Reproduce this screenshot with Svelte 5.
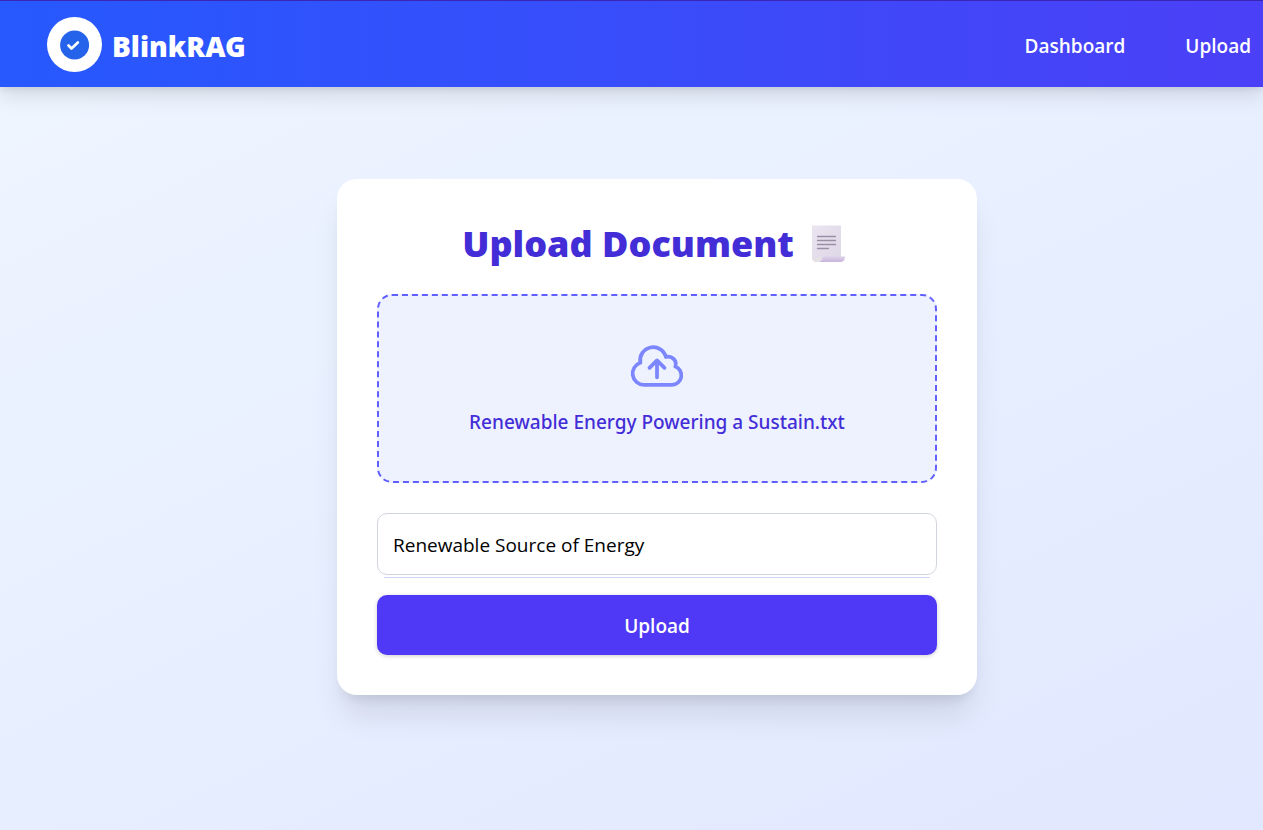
<script>
  let title = $state('Renewable Source of Energy');
  let fileName = $state('Renewable Energy Powering a Sustain.txt');

  function pick(event) {
    const file = event.currentTarget.files[0];
    if (file) fileName = file.name;
  }
</script>

<div class="page">
  <nav class="bar">
    <a class="brand" href="#home">
      <span class="logo">
        <svg viewBox="0 0 30 30" aria-hidden="true">
          <circle cx="14.6" cy="15" r="14.5" fill="#2563eb" />
          <path d="M8.500 15.500l3 3 6.400-6" fill="none" stroke="#fff" stroke-width="2.7" stroke-linecap="round" stroke-linejoin="round" />
        </svg>
      </span>
      <span class="name">BlinkRAG</span>
    </a>
    <div class="links">
      <a href="#dashboard">Dashboard</a>
      <a href="#upload">Upload</a>
    </div>
  </nav>

  <main>
    <form class="card" onsubmit={(event) => event.preventDefault()}>
      <h1>
        Upload Document
        <svg class="doc" viewBox="0 0 36 40" aria-hidden="true">
          <defs>
            <linearGradient id="sheet" x1="0" y1="0" x2="1" y2="1">
              <stop offset="0" stop-color="#eae5f0" />
              <stop offset="1" stop-color="#ddd6e6" />
            </linearGradient>
            <linearGradient id="roll" x1="0" y1="0" x2="0" y2="1">
              <stop offset="0" stop-color="#dfd2ec" />
              <stop offset="1" stop-color="#c6b4da" />
            </linearGradient>
          </defs>
          <path d="M2 2.500q0-1 1-1h27q1 0 1 1V34H12l-5 4q-5 0-5-5z" fill="url(#sheet)" />
          <path d="M12.500 32.500H35q0 5.500-5 5.500H7q5 0 5.500-5.500z" fill="url(#roll)" />
          <path d="M2 33q0 5 5 5 5 0 5.500-5.500Q9 32 7 34q-3 2-5-1z" fill="#e3e0e6" />
          <path d="M7.500 12.500h18M7.500 16.500h18M7.500 20.500h18M7.500 24.500h11" stroke="#9b8fa6" stroke-width="1.300" stroke-linecap="round" />
        </svg>
      </h1>

      <label class="drop">
        <input class="file" type="file" onchange={pick} />
        <svg class="cloud" viewBox="0 0 24 24" fill="none" stroke="currentColor" stroke-width="1.5" stroke-linecap="round" stroke-linejoin="round" aria-hidden="true">
          <path d="M12 16.500V9.750m0 0 3 3m-3-3-3 3M6.750 19.500a4.500 4.500 0 0 1-1.410-8.775 5.250 5.250 0 0 1 10.233-2.330 3 3 0 0 1 3.758 3.848A3.752 3.752 0 0 1 18 19.500H6.750Z" />
        </svg>
        <span>{fileName}</span>
      </label>

      <div class="field">
        <input class="title" type="text" aria-label="Document title" bind:value={title} />
      </div>
      <button type="submit">Upload</button>
    </form>
  </main>
</div>

<style>
  :global(body) {
    margin: 0;
  }

  .page,
  .page * {
    box-sizing: border-box;
  }

  .page {
    min-height: 100vh;
    display: flex;
    flex-direction: column;
    overflow: hidden;
    background: linear-gradient(155deg, #eff6ff, #e0e7ff 105%);
    font-family: "Open Sans", "Noto Sans", sans-serif;
    font-size: 19px;
    line-height: 30px;
  }

  .bar {
    display: flex;
    align-items: center;
    justify-content: space-between;
    padding: 16px 12px 15px 47px;
    border-top: 1px solid #3a25b4;
    background: linear-gradient(to right, #2659fe, #4b40f7);
    box-shadow: 0 10px 19px rgb(0 0 0 / 0.1), 0 3px 6px rgb(0 0 0 / 0.07);
    color: #fff;
  }

  .bar a {
    color: inherit;
    text-decoration: none;
  }

  .brand {
    display: flex;
    align-items: center;
    gap: 10px;
  }

  .logo {
    display: grid;
    place-items: center;
    width: 55px;
    height: 55px;
    border-radius: 50%;
    background: #fff;
  }

  .logo svg {
    width: 30px;
    height: 30px;
  }

  .name {
    padding-top: 2px;
    font-family: "Noto Sans", "Open Sans", sans-serif;
    font-size: 28px;
    font-weight: 900;
  }

  .links {
    display: flex;
    gap: 60px;
    padding-top: 2px;
    font-weight: 600;
  }

  main {
    display: flex;
    justify-content: center;
    padding: 92px 0 92px 51px;
  }

  .card {
    width: 100%;
    max-width: 640px;
    display: flex;
    flex-direction: column;
    padding: 40px;
    border-radius: 20px;
    background: #fff;
    box-shadow: 0 25px 31px -6px rgb(0 0 0 / 0.1), 0 10px 12px -7px rgb(0 0 0 / 0.1);
  }

  h1 {
    display: flex;
    align-items: center;
    justify-content: center;
    gap: 16px;
    margin: 0 0 25px;
    padding-right: 6px;
    color: #432dd7;
    font-family: "Noto Sans", "Open Sans", sans-serif;
    font-size: 36px;
    font-weight: 900;
    line-height: 50px;
  }

  .doc {
    width: 36px;
    height: 40px;
  }

  .drop {
    position: relative;
    display: flex;
    flex-direction: column;
    align-items: center;
    gap: 11px;
    padding: 40px 40px 44px;
    border: 2px dashed #615fff;
    border-radius: 15px;
    background: #eef2ff;
    color: #432dd7;
    font-family: "Noto Sans", "Open Sans", sans-serif;
    font-weight: 500;
    cursor: pointer;
  }

  .file {
    position: absolute;
    inset: 0;
    opacity: 0;
  }

  .cloud {
    width: 60px;
    height: 60px;
    color: #7c86ff;
  }

  .field {
    display: flex;
    flex-direction: column;
    gap: 2px;
    margin-top: 30px;
  }

  .field::after {
    content: "";
    height: 1px;
    margin: 0 7px;
    background: #d2d5f5;
  }

  .title {
    width: 100%;
    height: 62px;
    padding: 17px 15px 15px;
    border: 1px solid #d1d5dc;
    border-radius: 10px;
    background: #fff;
    color: #000;
    font: inherit;
  }

  button {
    height: 60px;
    margin-top: 17px;
    padding-top: 3px;
    border: 0;
    border-radius: 10px;
    background: #4f39f6;
    box-shadow: 0 1px 4px rgb(0 0 0 / 0.2);
    color: #fff;
    font: inherit;
    font-weight: 600;
    cursor: pointer;
  }
</style>
